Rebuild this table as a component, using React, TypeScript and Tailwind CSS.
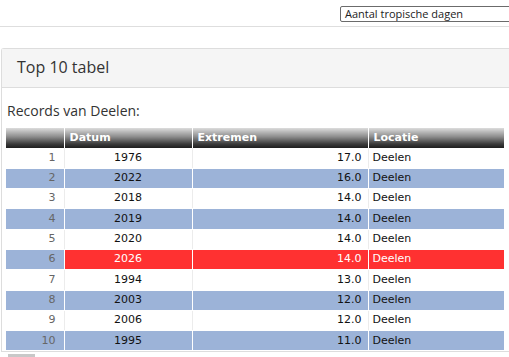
import React from 'react';

type Row = { nr: number; jaar: string; waarde: string; locatie: string; highlight?: boolean };

const rows: Row[] = [
  { nr: 1, jaar: '1976', waarde: '17.0', locatie: 'Deelen' },
  { nr: 2, jaar: '2022', waarde: '16.0', locatie: 'Deelen' },
  { nr: 3, jaar: '2018', waarde: '14.0', locatie: 'Deelen' },
  { nr: 4, jaar: '2019', waarde: '14.0', locatie: 'Deelen' },
  { nr: 5, jaar: '2020', waarde: '14.0', locatie: 'Deelen' },
  { nr: 6, jaar: '2026', waarde: '14.0', locatie: 'Deelen', highlight: true },
  { nr: 7, jaar: '1994', waarde: '13.0', locatie: 'Deelen' },
  { nr: 8, jaar: '2003', waarde: '12.0', locatie: 'Deelen' },
  { nr: 9, jaar: '2006', waarde: '12.0', locatie: 'Deelen' },
  { nr: 10, jaar: '1995', waarde: '11.0', locatie: 'Deelen' },
];

const headCell =
  'h-[20px] p-0 pl-[5px] text-left font-bold text-white text-[11px] border-r border-white bg-[linear-gradient(to_bottom,#dcdcdc_0%,#8a8a8a_45%,#3a3a3a_80%,#1e1e1e_100%)]';

export default function App() {
  return (
    <div className="w-[509px] h-[357px] overflow-hidden bg-white font-['Open_Sans',sans-serif] relative">
      {/* top bar with selector */}
      <div className="h-[27px] border-b border-[#dedede] flex justify-end pt-[6px]">
        <div className="w-[180px] h-[16px] mr-[-11px] border border-[#6b6b6b] rounded-[2px] pl-[4px] text-[11px] leading-[14px] text-[#222]">
          Aantal tropische dagen
        </div>
      </div>

      {/* panel */}
      <div className="mt-[21px] ml-[1px] border border-[#dddddd] border-r-0 rounded-tl-[3px] bg-white">
        <div className="h-[39px] bg-[#f5f5f5] border-b border-[#dddddd] flex items-center pl-[15px] pb-[2px] text-[16px] text-[#333]">
          Top 10 tabel
        </div>
        <div className="px-[4px] pt-[13px]">
          <div className="text-[14px] text-[#333] leading-[20px] mb-[7px] pl-[1px]">Records van Deelen:</div>
          <table className="w-[498px] border-collapse font-['DejaVu_Sans',Verdana,sans-serif] text-[11px] text-[#111]">
            <thead>
              <tr>
                <th className={headCell + ' w-[58px]'}></th>
                <th className={headCell + ' w-[128px]'}>Datum</th>
                <th className={headCell + ' w-[176px]'}>Extremen</th>
                <th className={headCell + ' border-r-0'}>Locatie</th>
              </tr>
            </thead>
            <tbody>
              {rows.map((r) => {
                const even = r.nr % 2 === 0;
                const rowBg = even ? 'bg-[#9cb3d8]' : 'bg-white';
                const line = even ? 'border-white' : 'border-[#ececec]';
                const cellBg = r.highlight ? 'bg-[#ff3131] text-white' : rowBg;
                return (
                  <tr key={r.nr} className="h-[20.3px]">
                    <td className={`${rowBg} ${line} border-r border-b border-b-white text-right pr-[8px] text-[#666]`}>{r.nr}</td>
                    <td className={`${cellBg} ${line} border-r border-b border-b-white text-center`}>{r.jaar}</td>
                    <td className={`${cellBg} ${line} border-r border-b border-b-white text-right pr-[6px]`}>{r.waarde}</td>
                    <td className={`${cellBg} border-b border-b-white pl-[4px]`}>{r.locatie}</td>
                  </tr>
                );
              })}
            </tbody>
          </table>
        </div>
      </div>
      <div className="absolute left-[8px] top-[354px] w-[27px] h-[3px] bg-[#c8c8c8]"></div>
    </div>
  );
}
